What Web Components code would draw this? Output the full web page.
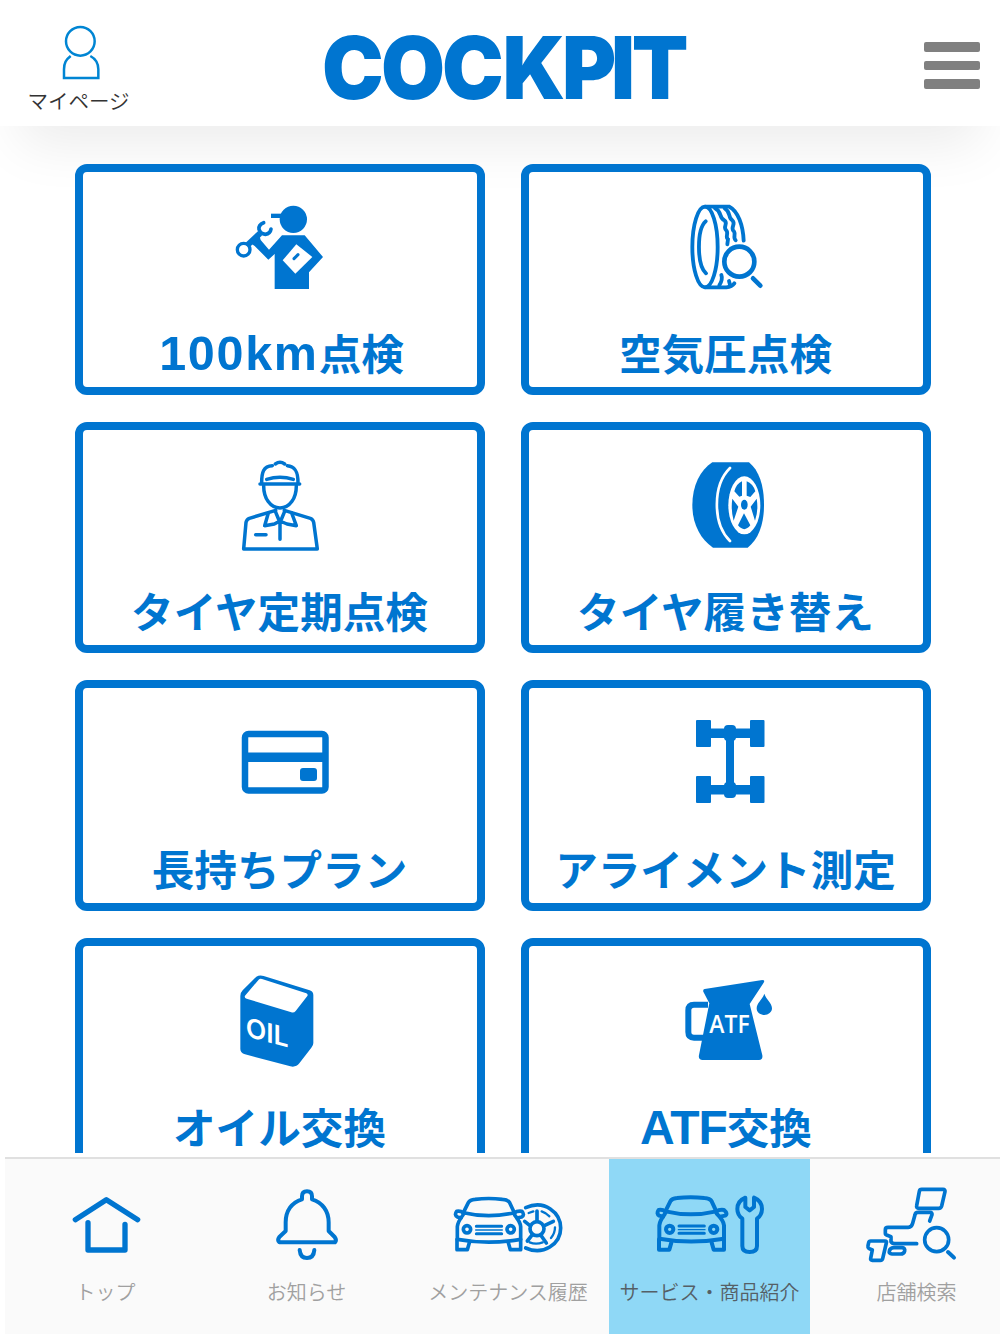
<!DOCTYPE html>
<html lang="ja">
<head>
<meta charset="utf-8">
<meta name="viewport" content="width=device-width, initial-scale=1">
<title>COCKPIT</title>
<style>
    :root {
        --color-brand: #0075d0;
        --color-tab-bg: #fafafa;
        --color-tab-active: #8fd8f6;
    }

    body {
        margin: 0;
        font-family: "Noto Sans CJK JP", "Noto Sans", sans-serif;
        background: #ffffff;
    }
</style>
</head>
<body>
<cockpit-app>
    <cockpit-header slot="header"></cockpit-header>

    <service-card label="点検" latin="100km" style="--latin-size: 48.500px; --latin-spacing: 1.700px; --label-shift: 4px">
        <svg viewBox="-15 0 390 330">
            <g fill="currentColor">
                <circle cx="220" cy="88" r="41"/>
                <path d="M153 71H195V84H153Z"/>
                <path d="M186 136H254L309 201L267 247V297H164V192L145 209L104 168L92 160L118 136L122 150L147 179Z"/>
            </g>
            <path d="M188 211L229 163L277 201L226 251Z" fill="#fff"/>
            <path d="M222 206L234 194" stroke="currentColor" stroke-width="9" stroke-linecap="round"/>
            <path d="M84 164L120 130" stroke="currentColor" stroke-width="18"/>
            <circle cx="71" cy="179" r="19" fill="#fff" stroke="currentColor" stroke-width="10"/>
            <path d="M131 98Q115 104 117 118Q121 132 136 133Q151 131 153 117" fill="none" stroke="currentColor" stroke-width="11" stroke-linecap="round"/>
        </svg>
    </service-card>

    <service-card label="空気圧点検">
        <svg viewBox="-27 0 390 330" fill="none" stroke="currentColor" stroke-width="11.500" stroke-linecap="round">
            <ellipse cx="105" cy="171" rx="38" ry="121"/>
            <path d="M107 94C80 118 80 225 108 250"/>
            <path d="M105 50H178C204 63 219 106 221 152M105 292H169Q186 290 193 280"/>
            <path d="M135 55C157 65 146 84 163 91C176 100 158 109 168 120C178 130 164 139 174 148L172 163"/>
            <path d="M164 55C184 66 173 84 187 91C199 102 181 111 190 122C200 131 187 140 197 151"/>
            <path d="M154 255Q159 268 148 286M177 273L180 284"/>
            <circle cx="208" cy="215" r="45" stroke-width="14"/>
            <path d="M249 265L271 287" stroke-width="14"/>
        </svg>
    </service-card>

    <service-card label="タイヤ定期点検">
        <svg viewBox="-15 -6 390 330" fill="none" stroke="currentColor" stroke-width="10.500" stroke-linecap="round" stroke-linejoin="round">
            <path d="M120 102H239M125 98C125 68 130 48 157 47M202 47C228 49 234 69 234 98M166 42Q180 32 194 42"/>
            <path d="M140 88Q180 76 220 88"/>
            <path d="M131 107C131 145 151 174 180 174C209 174 229 145 229 107"/>
            <path d="M167 181L88 205Q80 208 78 217L71 297H292L281 217Q279 208 271 205L193 181"/>
            <path d="M145 189L134 227L163 222L180 213V268M215 189L229 227L201 222L180 213M166 184L178 213M194 184L182 213"/>
            <path d="M107 254H138"/>
        </svg>
    </service-card>

    <service-card label="タイヤ履き替え">
        <svg viewBox="-27 -6 390 330">
            <path d="M127 37H237C267 62 282 105 282 165C282 222 266 267 233 293H129C91 267 67 222 67 165C67 108 91 60 127 37Z" fill="currentColor"/>
            <path d="M180 54C128 105 127 221 180 273" fill="none" stroke="#fff" stroke-width="8" stroke-linecap="round"/>
            <ellipse cx="223" cy="166" rx="48" ry="87" fill="#fff"/>
            <g fill="currentColor">
                <ellipse cx="223" cy="164" rx="10" ry="15"/>
                <path d="M216 94V137L208 140L193 124Q200 100 216 94ZM230 94Q249 101 256 124L241 141L230 137Z"/>
                <path d="M187 146L205 170L191 212Q182 181 187 146ZM260 146L242 170L255 212Q266 181 260 146Z"/>
                <path d="M222 190L241 226Q223 249 204 226Z"/>
            </g>
        </svg>
    </service-card>

    <service-card label="長持ちプラン">
        <svg viewBox="215 706 130 110">
            <rect x="245" y="734" width="80.500" height="56.500" rx="3.500" fill="none" stroke="currentColor" stroke-width="6.500"/>
            <path d="M243 752.500H328V762H243Z" fill="currentColor"/>
            <rect x="300" y="768" width="17" height="13" rx="3" fill="currentColor"/>
        </svg>
    </service-card>

    <service-card label="アライメント測定">
        <svg viewBox="661 706 130 110" fill="currentColor">
            <rect x="696" y="720" width="15" height="27" rx="1"/>
            <rect x="750" y="720" width="14.500" height="27" rx="1"/>
            <rect x="696" y="776" width="15" height="27" rx="1"/>
            <rect x="750" y="776" width="14.500" height="27" rx="1"/>
            <path d="M710 728.500H751V738H710ZM710 785H751V794.500H710ZM726 730H734V795H726Z"/>
            <rect x="724" y="725" width="12" height="16" rx="4"/>
            <rect x="724" y="782" width="12" height="16" rx="4"/>
        </svg>
    </service-card>

    <service-card label="オイル交換">
        <svg viewBox="-15 12 390 330">
            <path d="M109 50Q119 44 131 48L269 91Q280 95 280 105V249Q280 257 274 263L238 310Q228 323 211 319L75 283Q61 279 61 267V108Q61 98 68 91Z" fill="currentColor"/>
            <path d="M75 107L116 59Q120 54 126 57L259 100Q265 103 262 108L227 153Q222 159 214 157L80 116Q72 113 75 107Z" fill="#fff"/>
            <text transform="matrix(1 .26 0 1 77 229)" fill="#fff" font-family="Inter" font-size="80" font-weight="600" textLength="129" lengthAdjust="spacingAndGlyphs">OIL</text>
        </svg>
    </service-card>

    <service-card label="交換" latin="ATF" style="--latin-spacing: -1px; --label-shift: 1px">
        <svg viewBox="-27 12 390 330">
            <path d="M104 87L277 60Q286 60 281 68L239 132L277 286Q279 300 267 300H98Q84 300 87 285L118 130L100 95Q98 88 104 87Z" fill="currentColor"/>
            <path d="M114 134H72Q55 134 55 151V216Q55 233 72 233H100" fill="none" stroke="currentColor" stroke-width="18"/>
            <path d="M283 101C287 116 306 129 306 145C306 157 295 165 283 165C270 165 260 157 260 145C260 129 279 116 283 101Z" fill="currentColor"/>
            <text x="118" y="220" fill="#fff" font-family="Open Sans" font-size="74" font-weight="600" textLength="121" lengthAdjust="spacingAndGlyphs">ATF</text>
        </svg>
    </service-card>

    <tab-bar slot="tabs">
        <tab-item label="トップ">
            <svg viewBox="122 120 390 240" fill="none" stroke="currentColor" stroke-width="16" stroke-linecap="round" stroke-linejoin="round">
                <path d="M225 239L318 179L412 239M263 248V330H374V253"/>
            </svg>
        </tab-item>
        <tab-item label="お知らせ">
            <svg viewBox="727 120 390 240" fill="none" stroke="currentColor" stroke-width="12" stroke-linecap="round" stroke-linejoin="round">
                <path d="M907 178V169Q907 154 922 154Q937 154 937 169V178C968 187 987 213 987 247V273L1005 291Q1012 301 1006 307H839Q832 301 839 291L858 273V247C858 213 876 187 907 178Z"/>
                <path d="M900 330Q902 354 922 354Q942 354 944 330"/>
            </svg>
        </tab-item>
        <tab-item label="メンテナンス履歴">
            <svg viewBox="130 120 390 240" fill="none" stroke="currentColor" stroke-width="11" stroke-linecap="round" stroke-linejoin="round">
                <path d="M191 218L206 188Q211 179 226 178Q267 173 308 178Q325 179 330 188L344 218"/>
                <path d="M191 219Q183 212 171 214Q163 225 173 231L184 234M344 219Q352 212 367 214Q376 225 366 231L352 234"/>
                <path d="M192 218Q267 236 344 218M190 225Q174 246 173 260V298M345 225Q362 246 363 260V298M173 298Q267 315 363 298"/>
                <path d="M172 298V329H203L209 308M363 298V329H332L326 308"/>
                <circle cx="202" cy="268" r="11"/>
                <circle cx="333" cy="268" r="11"/>
                <path d="M230 259H306M230 281H306" stroke-width="9"/>
                <path d="M228 270H308" stroke-width="4"/>
                <path d="M378 203C435 178 483 218 483 264C483 312 431 348 378 324"/>
                <circle cx="412" cy="266" r="21"/>
                <path d="M412 244V213M434 257L461 244M423 285L440 309M398 284L383 303M391 257L375 244"/>
                <path d="M387 219L401 214M426 214Q441 219 449 229M466 262Q466 280 454 294M429 307Q409 315 390 307" stroke-width="7"/>
            </svg>
        </tab-item>
        <tab-item label="サービス・商品紹介" active>
            <svg viewBox="733 120 390 240" fill="none" stroke="currentColor" stroke-width="12" stroke-linecap="round" stroke-linejoin="round">
                <g transform="translate(603 -4)">
                    <path d="M191 218L206 188Q211 179 226 178Q267 173 308 178Q325 179 330 188L344 218"/>
                    <path d="M191 219Q183 212 171 214Q163 225 173 231L184 234M344 219Q352 212 367 214Q380 225 370 231L356 234"/>
                    <path d="M192 218Q267 236 344 218M190 225Q174 246 173 260V302M345 225Q366 246 367 260V302M173 300Q267 317 367 300"/>
                    <path d="M172 302V333H203L209 312M367 302V333H336L330 312"/>
                    <circle cx="204" cy="272" r="11"/>
                    <circle cx="336" cy="272" r="11"/>
                    <path d="M232 262H308M232 284H308" stroke-width="9"/>
                    <path d="M230 273H310" stroke-width="4"/>
                </g>
                <path d="M1034 173Q1010 183 1010 207Q1010 225 1025 236V318Q1025 336 1047 336Q1069 336 1069 318V236Q1084 225 1084 207Q1084 183 1060 173V201L1047 211L1034 201Z"/>
            </svg>
        </tab-item>
        <tab-item label="店舗検索" style="--label-shift: 12px">
            <svg viewBox="138 120 390 240" fill="none" stroke="currentColor" stroke-width="11" stroke-linecap="round" stroke-linejoin="round">
                <path d="M365 148H429Q436 148 435 155L425 198Q423 205 416 205H357Q348 205 350 197L358 154Q359 148 365 148Z"/>
                <path d="M389 243L396 224Q397 217 390 217H354Q346 217 345 224L338 250Q335 262 325 262H264Q256 262 256 269V280Q256 285 262 286L273 290V305Q276 311 284 311H350"/>
                <path d="M212 303H255Q261 303 259 309L248 356Q247 361 241 361H217Q211 361 212 355L217 330L206 325Q203 323 204 317L206 308Q207 303 212 303Z"/>
                <path d="M281 323H306Q316 324 314 333Q312 342 301 342H276Q266 341 268 333Q270 324 281 323Z"/>
                <circle cx="410" cy="299" r="36"/>
                <path d="M444 336L462 353" stroke-width="12"/>
            </svg>
        </tab-item>
    </tab-bar>
</cockpit-app>

<script>
class CockpitApp extends HTMLElement {
    constructor() {
        super();
        this.attachShadow({ mode: 'open' });
    }

    connectedCallback() {
        this.shadowRoot.innerHTML = `
            <style>
                :host {
                    display: flex;
                    flex-direction: column;
                    width: 1000px;
                    height: 1334px;
                    overflow: hidden;
                    background: #ffffff;
                }

                main {
                    flex: none;
                    box-sizing: border-box;
                    height: 1027px;
                    overflow: hidden;
                    padding: 38px 69px 0 75px;
                    display: grid;
                    grid-template-columns: 410px 410px;
                    grid-auto-rows: 231px;
                    gap: 27px 36px;
                    align-content: start;
                }

                slot[name="tabs"] {
                    display: block;
                    margin-top: 4px;
                }
            </style>

            <slot name="header"></slot>
            <main><slot></slot></main>
            <slot name="tabs"></slot>
        `;
    }
}

class CockpitHeader extends HTMLElement {
    constructor() {
        super();
        this.attachShadow({ mode: 'open' });
    }

    connectedCallback() {
        this.shadowRoot.innerHTML = `
            <style>
                :host {
                    display: grid;
                    grid-template-columns: 160px 1fr 160px;
                    flex: none;
                    height: 126px;
                    background: #ffffff;
                    box-shadow: 0 38px 54px -20px rgba(0, 0, 0, 0.08);
                }

                .mypage {
                    display: flex;
                    flex-direction: column;
                    align-items: center;
                    padding: 25px 3px 0 0;
                    color: #333333;
                    font-size: 20.500px;
                    line-height: 30px;
                    font-weight: 350;
                }

                .mypage svg {
                    display: block;
                    width: 40px;
                    height: 56px;
                    margin: 0 0 4px 4px;
                    color: #0085d3;
                }

                .logo {
                    display: block;
                    width: 370px;
                    height: 90px;
                    margin: 23px 0 0 158px;
                    overflow: visible;
                    color: var(--color-brand);
                }

                .menu {
                    justify-self: end;
                    display: flex;
                    flex-direction: column;
                    gap: 9px;
                    width: 56px;
                    margin: 42px 20px 0 0;
                }

                .menu i {
                    height: 9.500px;
                    border-radius: 2px;
                    background: #808080;
                }
            </style>

            <div class="mypage">
                <svg viewBox="183 75 120 168" fill="none" stroke="currentColor" stroke-width="7.500">
                    <circle cx="241" cy="124" r="43"/>
                    <path d="M212 168C198 179 192 188 192 208V234H295V208C295 188 286 176 271 168"/>
                </svg>
                <span>マイページ</span>
            </div>
            <svg class="logo" viewBox="318 23 370 90" fill="currentColor" font-family="Inter" font-weight="900" font-size="87">
                <text transform="scale(.95 1)" y="99" x="339 401 465.300 528.900 591.600 643.200 665">COCKPIT</text>
            </svg>
            <div class="menu"><i></i><i></i><i></i></div>
        `;
    }
}

class ServiceCard extends HTMLElement {
    constructor() {
        super();
        this.attachShadow({ mode: 'open' });
    }

    connectedCallback() {
        const latin = this.getAttribute('latin');
        const prefix = latin ? `<span class="latin">${latin}</span>` : '';
        this.shadowRoot.innerHTML = `
            <style>
                :host {
                    box-sizing: border-box;
                    display: flex;
                    flex-direction: column;
                    align-items: center;
                    border: 8px solid var(--color-brand);
                    border-radius: 12px;
                    padding-top: 18px;
                    background: #ffffff;
                    color: var(--color-brand);
                }

                ::slotted(svg) {
                    display: block;
                    flex: none;
                    width: 130px;
                    height: 110px;
                }

                .label {
                    height: 60px;
                    margin: 22px 0 0 -1px;
                    padding-left: var(--label-shift, 0);
                    font-size: 42.600px;
                    line-height: 60px;
                    font-weight: 700;
                    white-space: nowrap;
                }

                .latin {
                    font-family: "Liberation Sans", Arial, sans-serif;
                    font-size: var(--latin-size, 48px);
                    line-height: 1;
                    letter-spacing: var(--latin-spacing, 0);
                }
            </style>

            <slot></slot>
            <div class="label">${prefix}${this.getAttribute('label')}</div>
        `;
    }
}

class TabBar extends HTMLElement {
    constructor() {
        super();
        this.attachShadow({ mode: 'open' });
    }

    connectedCallback() {
        this.shadowRoot.innerHTML = `
            <style>
                :host {
                    display: grid;
                    grid-template-columns: 201px 201px 202px 201px 201px;
                    box-sizing: border-box;
                    width: 995px;
                    height: 177px;
                    margin-left: 5px;
                    overflow: hidden;
                    border-top: 2px solid #e0e0e0;
                    background: var(--color-tab-bg);
                }
            </style>

            <slot></slot>
        `;
    }
}

class TabItem extends HTMLElement {
    constructor() {
        super();
        this.attachShadow({ mode: 'open' });
    }

    connectedCallback() {
        this.shadowRoot.innerHTML = `
            <style>
                :host {
                    display: flex;
                    flex-direction: column;
                    align-items: center;
                    padding-top: 21px;
                    color: #a0a0a0;
                }

                :host([active]) {
                    background: var(--color-tab-active);
                    color: #555f66;
                }

                ::slotted(svg) {
                    display: block;
                    flex: none;
                    width: 130px;
                    height: 80px;
                    overflow: visible;
                    color: var(--color-brand);
                }

                .label {
                    margin-top: 17px;
                    padding-left: var(--label-shift, 0);
                    font-size: 20px;
                    line-height: 30px;
                    font-weight: 350;
                    white-space: nowrap;
                }
            </style>

            <slot></slot>
            <div class="label">${this.getAttribute('label')}</div>
        `;
    }
}

customElements.define('cockpit-app', CockpitApp);
customElements.define('cockpit-header', CockpitHeader);
customElements.define('service-card', ServiceCard);
customElements.define('tab-bar', TabBar);
customElements.define('tab-item', TabItem);
</script>
</body>
</html>
